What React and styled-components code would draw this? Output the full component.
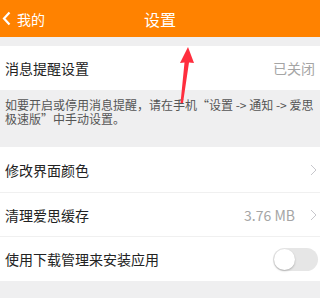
import React from 'react';
import styled, { createGlobalStyle } from 'styled-components';

const GlobalStyle = createGlobalStyle`
  body {
    margin: 0;
    background: #efeff0;
    font-family: "Noto Sans CJK SC", "Noto Sans", sans-serif;
  }
`;

const Page = styled.div`
  position: relative;
  width: 320px;
  height: 298px;
  overflow: hidden;
  background: #efeff0;
`;

const Header = styled.header`
  height: 37px;
  background: #ff8200;
  display: flex;
  align-items: center;
  justify-content: center;
  position: relative;
  color: #fff;
`;

const Back = styled.div`
  position: absolute;
  left: 2px;
  top: 0;
  height: 37px;
  display: flex;
  align-items: center;
  gap: 6px;
  font-size: 14px;
`;

const Title = styled.h1`
  margin: 0;
  font-size: 16px;
  font-weight: normal;
`;

const Group = styled.section`
  background: #fff;
  margin-top: ${p => p.$gap || 0}px;
`;

const Row = styled.div`
  height: ${p => p.$h || 44}px;
  display: flex;
  align-items: center;
  padding: 0 3px 0 5px;
  font-size: 14px;
  color: #222;
  border-top: ${p => (p.$line ? '1px solid #f0f0f0' : 'none')};
`;

const Label = styled.span`
  flex: 1;
`;

const Value = styled.span`
  color: #a5a5a5;
  font-size: 14px;
  margin-right: ${p => p.$mr || 0}px;
`;

const Chevron = styled.svg`
  margin-left: 15px;
  width: 7px;
  height: 12px;
`;

const Note = styled.p`
  margin: 0;
  padding: 8px 4px 21px 5px;
  font-size: 12px;
  line-height: 14px;
  color: #555;
`;

const Toggle = styled.div`
  width: 45px;
  height: 23px;
  border-radius: 12px;
  background: #e6e6e6;
  position: relative;
  margin-right: -1px;
  &::after {
    content: '';
    position: absolute;
    left: 1px;
    top: 1px;
    width: 21px;
    height: 21px;
    border-radius: 50%;
    background: #fff;
    box-shadow: 0 1px 2px rgba(0, 0, 0, 0.25);
  }
`;

const Arrow = styled.svg`
  position: absolute;
  left: 170px;
  top: 44px;
  width: 30px;
  height: 64px;
`;

const Caret = () => (
  <Chevron viewBox="0 0 7 12">
    <path d="M1 1l5 5-5 5" fill="none" stroke="#c7c7cc" strokeWidth="1" />
  </Chevron>
);

export default function App() {
  return (
    <Page>
      <GlobalStyle />
      <Header>
        <Back>
          <svg width="9" height="15" viewBox="0 0 9 15">
            <path d="M7.5 1.5L2 7.5l5.5 6" fill="none" stroke="#fff" strokeWidth="2.2" />
          </svg>
          我的
        </Back>
        <Title>设置</Title>
      </Header>

      <Group $gap={9}>
        <Row>
          <Label>消息提醒设置</Label>
          <Value $mr={2}>已关闭</Value>
        </Row>
      </Group>
      <Note>
        如要开启或停用消息提醒，请在手机“设置 -&gt; 通知 -&gt; 爱思极速版”中手动设置。
      </Note>

      <Group>
        <Row $h={45}>
          <Label>修改界面颜色</Label>
          <Caret />
        </Row>
        <Row $line $h={43}>
          <Label>清理爱思缓存</Label>
          <Value>3.76 MB</Value>
          <Caret />
        </Row>
        <Row $line $h={44}>
          <Label>使用下载管理来安装应用</Label>
          <Toggle />
        </Row>
      </Group>

      <Arrow viewBox="0 0 30 64">
        <path d="M18 3 L10 19 L14.5 18.5 L10.5 59 L13 59 L19 18.5 L24 19 Z" fill="#ff2e3e" />
      </Arrow>
    </Page>
  );
}
